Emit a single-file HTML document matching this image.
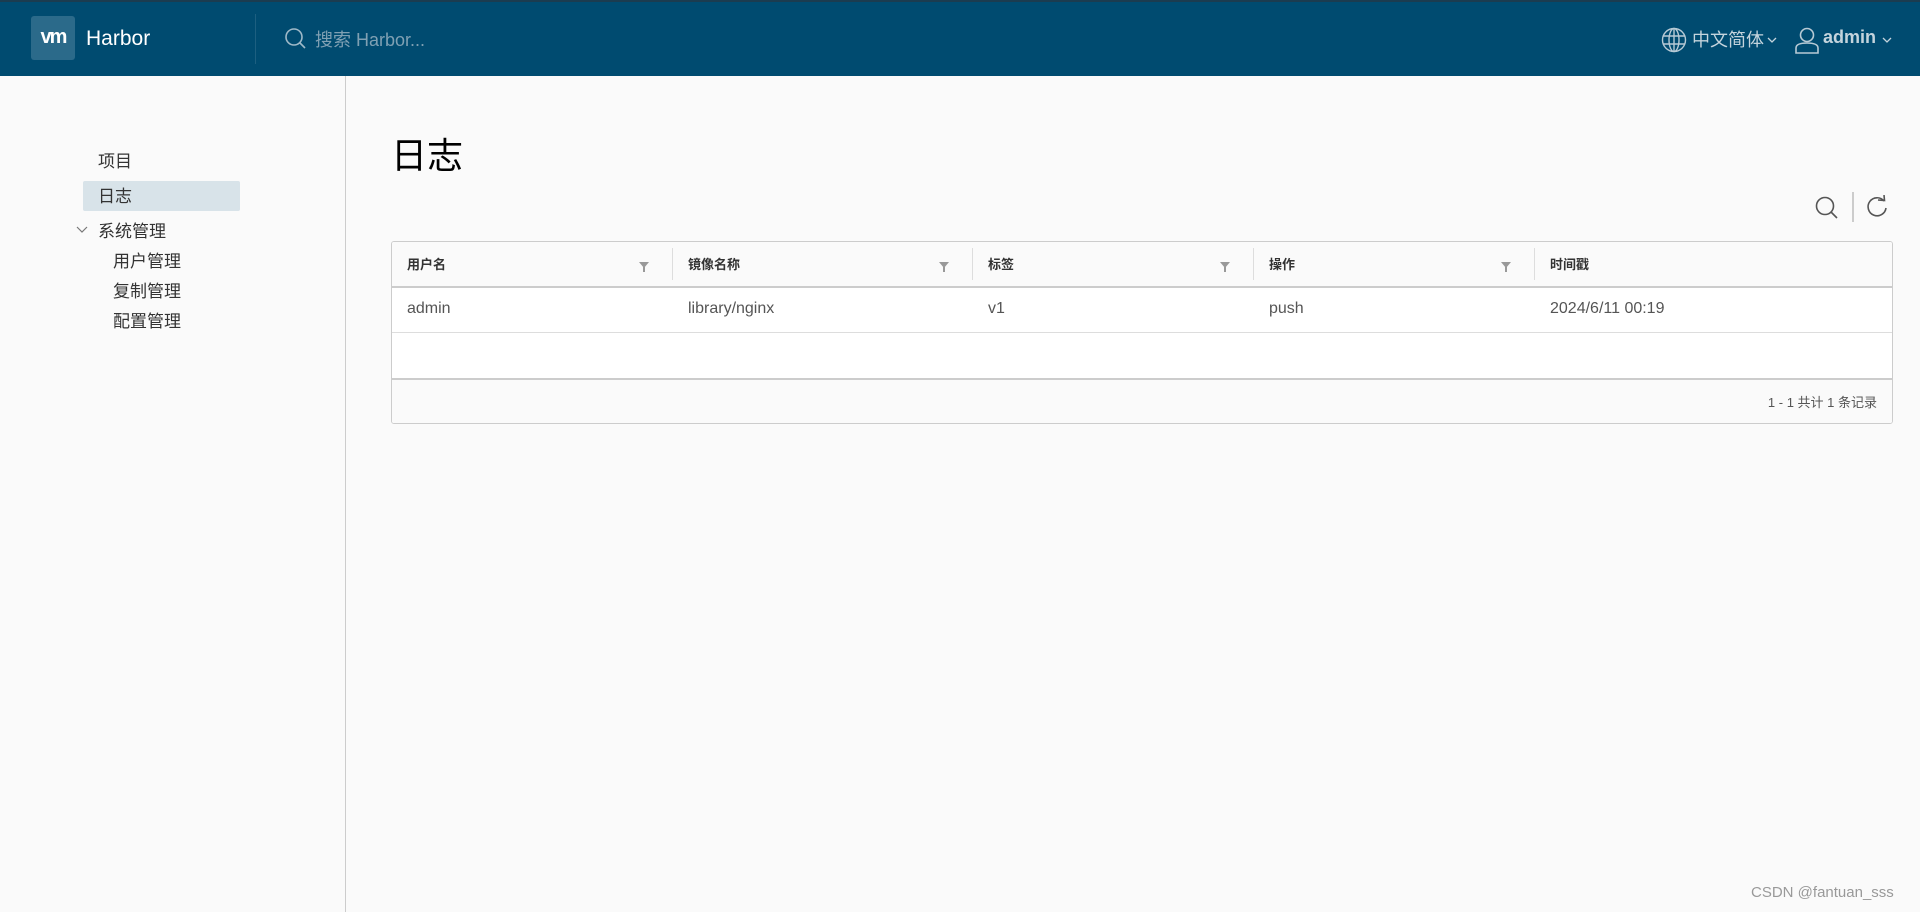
<!DOCTYPE html>
<html><head><meta charset="utf-8"><style>
*{margin:0;padding:0;box-sizing:border-box}
body{width:1920px;height:912px;overflow:hidden;background:#fafafa;font-family:"Liberation Sans","Noto Sans CJK SC",sans-serif;position:relative;color:#333}
.hdr{position:absolute;left:0;top:0;width:1920px;height:76px;background:#004b70;border-top:2px solid #1b3c50}
.abs{position:absolute}
.side{position:absolute;left:0;top:76px;width:346px;height:836px;border-right:1px solid #ccc;background:#fafafa}
.mi{position:absolute;font-size:17px;color:#333;white-space:nowrap}
.tbl{position:absolute;left:391px;top:241px;width:1502px;height:183px;border:1px solid #ccc;border-radius:3px;background:#fff;overflow:hidden}
.th{position:absolute;top:0;left:0;right:0;height:46px;background:#fafafa;border-bottom:2px solid #ccc}
.hc{position:absolute;top:12px;font-size:13px;font-weight:bold;color:#333}
.vl{position:absolute;top:6px;width:1px;height:32px;background:#ddd}
.fl{position:absolute;top:20px;width:0;height:0;border-left:5px solid transparent;border-right:5px solid transparent;border-top:6px solid #999}
.fl:after{content:"";position:absolute;left:-1px;top:-1px;width:2px;height:5px;background:#999}
.td{position:absolute;top:58px;font-size:16px;color:#555}
</style></head><body>
<div class="hdr">
 <div class="abs" style="left:31px;top:14px;width:44px;height:44px;background:#2b6a8a;border-radius:3px;color:#fff;font-weight:bold;font-size:20px;letter-spacing:-2px;text-align:center;line-height:42px">vm</div>
 <div class="abs" style="left:86px;top:25px;font-size:21px;color:#fff">Harbor</div>
 <div class="abs" style="left:255px;top:12px;width:1px;height:50px;background:#1d5f80"></div>
 <svg class="abs" style="left:284px;top:25px" width="24" height="24" viewBox="0 0 24 24"><circle cx="10" cy="10" r="8" fill="none" stroke="#9fb9c8" stroke-width="1.6"/><line x1="15.5" y1="15.5" x2="21" y2="21" stroke="#9fb9c8" stroke-width="1.6"/></svg>
 <div class="abs" style="left:315px;top:24px;font-size:18px;color:#7fa0b3">搜索 Harbor...</div>
 <svg class="abs" style="left:1661px;top:25px" width="26" height="26" viewBox="0 0 26 26" fill="none" stroke="#b7cad5" stroke-width="1.4"><circle cx="13" cy="13" r="11.5"/><ellipse cx="13" cy="13" rx="5" ry="11.5"/><line x1="13" y1="1.5" x2="13" y2="24.5"/><line x1="2" y1="9" x2="24" y2="9"/><line x1="2" y1="17" x2="24" y2="17"/></svg>
 <div class="abs" style="left:1692px;top:24px;font-size:18px;color:#c4d4dd">中文简体</div>
 <svg class="abs" style="left:1767px;top:34px" width="10" height="8"><polyline points="1,2 5,6 9,2" fill="none" stroke="#c4d4dd" stroke-width="1.3"/></svg>
 <svg class="abs" style="left:1795px;top:25px" width="24" height="27" viewBox="0 0 24 27" fill="none" stroke="#b7cad5" stroke-width="1.6"><circle cx="12" cy="8" r="6.5"/><path d="M1 26v-5c0-3 3-5 11-5s11 2 11 5v5z"/></svg>
 <div class="abs" style="left:1823px;top:25px;font-size:18px;font-weight:bold;color:#c4d4dd">admin</div>
 <svg class="abs" style="left:1882px;top:34px" width="10" height="8"><polyline points="1,2 5,6 9,2" fill="none" stroke="#c4d4dd" stroke-width="1.3"/></svg>
</div>
<div class="side">
 <div class="mi" style="left:98px;top:71px">项目</div>
 <div class="abs" style="left:83px;top:105px;width:157px;height:30px;background:#d8e3e9;border-radius:2px"></div>
 <div class="mi" style="left:98px;top:106px">日志</div>
 <svg class="abs" style="left:76px;top:149px" width="12" height="9"><polyline points="1,2 6,7 11,2" fill="none" stroke="#777" stroke-width="1.2"/></svg>
 <div class="mi" style="left:98px;top:141px">系统管理</div>
 <div class="mi" style="left:113px;top:171px">用户管理</div>
 <div class="mi" style="left:113px;top:201px">复制管理</div>
 <div class="mi" style="left:113px;top:231px">配置管理</div>
</div>
<div class="abs" style="left:391px;top:127px;font-size:36px;color:#000">日志</div>
<svg class="abs" style="left:1814px;top:195px" width="26" height="26" viewBox="0 0 26 26"><circle cx="11" cy="11" r="8.5" fill="none" stroke="#555" stroke-width="1.6"/><line x1="17" y1="17" x2="23" y2="23" stroke="#555" stroke-width="1.6"/></svg>
<div class="abs" style="left:1852px;top:192px;width:2px;height:30px;background:#ccc"></div>
<svg class="abs" style="left:1865px;top:195px" width="24" height="24" viewBox="0 0 24 24" fill="none" stroke="#555" stroke-width="1.6"><path d="M19 6A9 9 0 1 0 21 13"/><polyline points="13,5 19.5,5.5 19,0"/></svg>
<div class="tbl">
 <div class="th">
  <div class="hc" style="left:15px">用户名</div><div class="fl" style="left:247px"></div><div class="vl" style="left:280px"></div>
  <div class="hc" style="left:296px">镜像名称</div><div class="fl" style="left:547px"></div><div class="vl" style="left:580px"></div>
  <div class="hc" style="left:596px">标签</div><div class="fl" style="left:828px"></div><div class="vl" style="left:861px"></div>
  <div class="hc" style="left:877px">操作</div><div class="fl" style="left:1109px"></div><div class="vl" style="left:1142px"></div>
  <div class="hc" style="left:1158px">时间戳</div>
 </div>
 <div class="td" style="left:15px">admin</div>
 <div class="td" style="left:296px">library/nginx</div>
 <div class="td" style="left:596px">v1</div>
 <div class="td" style="left:877px">push</div>
 <div class="td" style="left:1158px">2024/6/11 00:19</div>
 <div class="abs" style="left:0;right:0;top:90px;height:1px;background:#ddd"></div>
 <div class="abs" style="left:0;right:0;top:136px;height:46px;background:#fafafa;border-top:2px solid #ccc"></div>
 <div class="abs" style="right:15px;top:150px;font-size:13px;color:#555">1 - 1 共计 1 条记录</div>
</div>
<div class="abs" style="left:1751px;top:884px;font-size:15px;color:#999">CSDN @fantuan_sss</div>
</body></html>
